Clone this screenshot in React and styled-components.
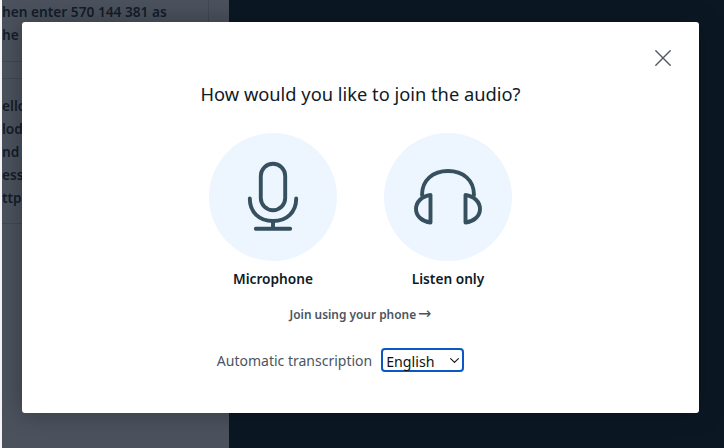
import styled, { createGlobalStyle } from "styled-components";

const GlobalStyle = createGlobalStyle`
  html, body {
    margin: 0;
    padding: 0;
    height: 100%;
    overflow: hidden;
    background: #0b1824;
  }
  #root {
    height: 100%;
  }
`;

const Page = styled.div`
  height: 448px;
  position: relative;
  display: flex;
  font-family: "Noto Sans", sans-serif;
  background: #0b1824;
`;

const Gutter = styled.div`
  width: 2px;
  background: #f4f5f6;
`;

const Sidebar = styled.div`
  width: 227px;
  height: 100%;
  background: #4b525d;
  overflow: hidden;
`;

const Thread = styled.div`
  width: 207px;
  height: 300px;
  box-sizing: border-box;
  border-right: 1px solid #414853;
  color: #131d29;
  font-size: 13.7px;
  font-weight: 600;
`;

const Message = styled.div`
  height: ${(p) => p.$height}px;
  box-sizing: border-box;
  padding-top: ${(p) => p.$top}px;
  border-bottom: 1px solid #414853;
  line-height: 23px;
  white-space: nowrap;
`;

const Overlay = styled.div`
  position: absolute;
  inset: 0;
  display: flex;
  align-items: flex-start;
  justify-content: center;
`;

const Modal = styled.div`
  position: relative;
  width: 677px;
  height: 391px;
  margin-top: 22px;
  margin-left: -3px;
  box-sizing: border-box;
  padding-top: 58px;
  background: #fff;
  border-radius: 3px;
  box-shadow: 0 0 24px rgba(0, 0, 0, 0.3);
  display: flex;
  flex-direction: column;
  align-items: center;
`;

const Close = styled.button`
  position: absolute;
  top: 27px;
  right: 27px;
  width: 18px;
  height: 18px;
  padding: 0;
  border: 0;
  background: none;
  display: flex;
`;

const Title = styled.h2`
  margin: 0;
  font-size: 18.3px;
  line-height: 28px;
  font-weight: 400;
  color: #0f1a26;
`;

const Options = styled.div`
  display: flex;
  gap: 47px;
  margin-top: 25px;
`;

const Option = styled.div`
  width: 128px;
  display: flex;
  flex-direction: column;
  align-items: center;
  gap: 8px;
`;

const Circle = styled.div`
  width: 128px;
  height: 128px;
  border-radius: 50%;
  background: #edf6fe;
  display: flex;
  align-items: center;
  justify-content: center;
`;

const OptionLabel = styled.div`
  font-size: 13.7px;
  line-height: 20px;
  font-weight: 600;
  color: #0f1a26;
  white-space: nowrap;
`;

const PhoneLink = styled.a`
  margin-top: 16px;
  font-size: 11.9px;
  line-height: 18px;
  font-weight: 600;
  color: #4a5561;
  display: flex;
  align-items: center;
  gap: 2px;
`;

const Arrow = styled.span`
  font-family: "DejaVu Sans", sans-serif;
  font-size: 16px;
  font-weight: 400;
`;

const TranscriptRow = styled.div`
  margin-top: 25px;
  margin-right: 40px;
  display: flex;
  align-items: center;
  gap: 9px;
`;

const TranscriptLabel = styled.label`
  font-size: 14px;
  color: #4a5561;
`;

const LangSelect = styled.div`
  width: 83px;
  height: 24px;
  box-sizing: border-box;
  border: 2px solid #0b57c4;
  border-radius: 4px;
  padding: 2px 3px 0 3px;
  display: flex;
  align-items: center;
  justify-content: space-between;
  font-size: 14.2px;
  color: #111;
`;

const Icon = styled.svg`
  fill: none;
  stroke: ${(p) => p.$stroke || "#36505f"};
  stroke-width: ${(p) => p.$weight || 3.9};
  stroke-linecap: round;
  stroke-linejoin: round;
  flex: none;
`;

const Chevron = styled(Icon)`
  margin-top: -2px;
`;

export default function App() {
  return (
    <>
      <GlobalStyle />
      <Page>
        <Gutter />
        <Sidebar>
          <Thread>
            <Message $height={62} $top={0}>
              hen enter 570 144 381 as
              <br />
              he call ID
            </Message>
            <Message $height={17} $top={0} />
            <Message $height={145} $top={15}>
              ello
              <br />
              lod
              <br />
              nd
              <br />
              ess
              <br />
              ttp
            </Message>
          </Thread>
        </Sidebar>
        <Overlay>
          <Modal>
            <Close aria-label="Close">
              <Icon width="18" height="18" viewBox="0 0 18 18" $stroke="#4f5965" $weight="1.4">
                <path d="M1.8 1.8 L16.2 16.2 M16.2 1.8 L1.8 16.2" />
              </Icon>
            </Close>
            <Title>How would you like to join the audio?</Title>
            <Options>
              <Option>
                <Circle>
                  <Icon width="52" height="72" viewBox="0 0 52 72">
                    <rect x="13.8" y="2.8" width="24.4" height="46.4" rx="12.2" />
                    <path d="M2.8 37.5 C2.8 51 12 60 26 60 C40 60 49.2 51 49.2 37.5" />
                    <path d="M26 60 V67.7 M8.8 67.7 H43.2" />
                  </Icon>
                </Circle>
                <OptionLabel>Microphone</OptionLabel>
              </Option>
              <Option>
                <Circle>
                  <Icon width="70" height="58" viewBox="0 0 70 58">
                    <path d="M9 27 C9 12 20 3 35 3 C50 3 61 12 61 27" />
                    <path d="M17.5 27 V54.5 C9 53.5 3 48 3 41 C3 34 9 28 17.5 27 Z" />
                    <path d="M52.5 27 V54.5 C61 53.5 67 48 67 41 C67 34 61 28 52.5 27 Z" />
                  </Icon>
                </Circle>
                <OptionLabel>Listen only</OptionLabel>
              </Option>
            </Options>
            <PhoneLink>
              Join using your phone <Arrow>→</Arrow>
            </PhoneLink>
            <TranscriptRow>
              <TranscriptLabel>Automatic transcription</TranscriptLabel>
              <LangSelect>
                English
                <Chevron width="9" height="5" viewBox="0 0 9 5" $stroke="#111" $weight="1.1">
                  <path d="M0.6 0.6 L4.5 4.4 L8.4 0.6" />
                </Chevron>
              </LangSelect>
            </TranscriptRow>
          </Modal>
        </Overlay>
      </Page>
    </>
  );
}
